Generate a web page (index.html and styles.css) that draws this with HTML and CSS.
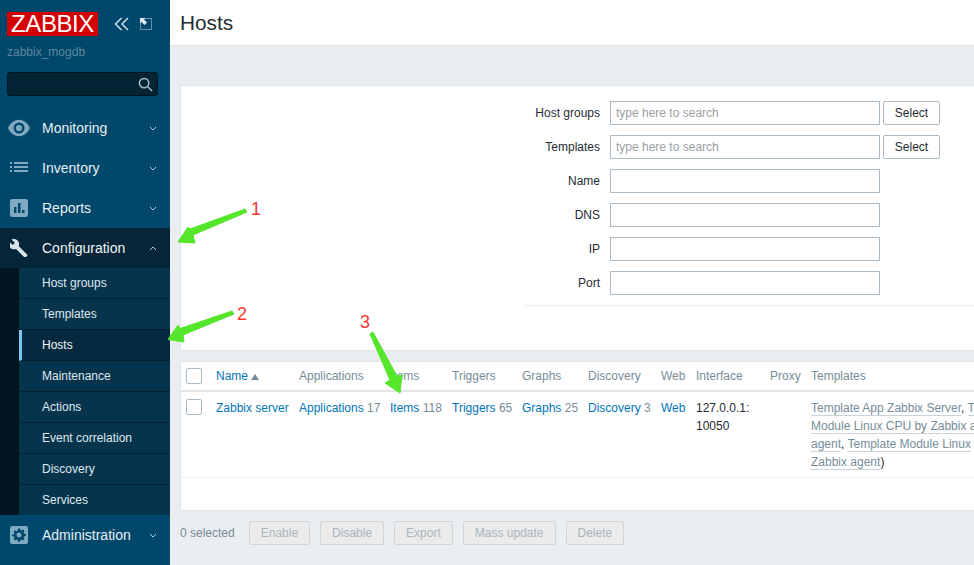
FILE: index.html
```html
<!DOCTYPE html>
<html lang="en">
<head>
<meta charset="utf-8">
<title>Hosts</title>
<link rel="stylesheet" href="styles.css">
</head>
<body>
<div class="app">
  <aside class="sidebar">
    <div class="brand">
      <div class="logo">ZABBIX</div>
      <svg class="collapse" viewBox="0 0 16 14"><path d="M7.500 1 1.500 7l6 6M14 1 8 7l6 6"/></svg>
      <svg class="kiosk" viewBox="0 0 12 12"><rect x=".5" y=".5" width="11" height="11" class="dots"/><path class="fill" d="M0 0h5.500L4 1.500l3 3-2.500 2.500-3-3L0 5.500z"/></svg>
    </div>
    <div class="server">zabbix_mogdb</div>
    <div class="search">
      <svg viewBox="0 0 16 16"><circle cx="6.500" cy="6.500" r="5"/><path d="m10.500 10.500 4.500 4.500"/></svg>
    </div>
    <nav class="menu">
      <div class="item">
        <svg class="ico eye" viewBox="0 0 20 20"><path class="fill" fill-rule="evenodd" d="M10 2.500C5.500 2.500 1.800 6 0 10c1.800 4 5.500 7.500 10 7.500s8.200-3.500 10-7.500c-1.800-4-5.500-7.500-10-7.500zm0 2.500a5 5 0 1 1 0 10 5 5 0 0 1 0-10zm0 2.200a2.800 2.800 0 1 0 0 5.600 2.800 2.800 0 0 0 0-5.600z"/></svg>
        <span>Monitoring</span><svg class="chev" viewBox="0 0 8 5"><path d="m1 1 3 3 3-3"/></svg>
      </div>
      <div class="item">
        <svg class="ico" viewBox="0 0 18 18"><path class="fill" d="M0 3h2v2H0zM4 3h14v2H4zM0 7h2v2H0zM4 7h14v2H4zM0 11h2v2H0zM4 11h14v2H4z"/></svg>
        <span>Inventory</span><svg class="chev" viewBox="0 0 8 5"><path d="m1 1 3 3 3-3"/></svg>
      </div>
      <div class="item">
        <svg class="ico" viewBox="0 0 18 18"><path class="fill" fill-rule="evenodd" d="M2 0h14a2 2 0 0 1 2 2v14a2 2 0 0 1-2 2H2a2 2 0 0 1-2-2V2a2 2 0 0 1 2-2zm2 8v6h2.500V8zm4-4v10h2.500V4zm4 7v3h2.500v-3z"/></svg>
        <span>Reports</span><svg class="chev" viewBox="0 0 8 5"><path d="m1 1 3 3 3-3"/></svg>
      </div>
      <div class="item open">
        <svg class="ico wrench" viewBox="0 0 20 20"><path d="M19 17.200 9.800 8c.8-2.200.3-4.700-1.400-6.400C6.500-.2 3.800-.5 1.700.5l3.700 3.700-2.500 2.500L-.9 3.100C-1.900 5.200-1.500 7.900.3 9.700c1.700 1.700 4.200 2.200 6.400 1.400l9.200 9.200c.5.500 1.200.500 1.600 0l1.500-1.500c.500-.6.500-1.200 0-1.600z"/></svg>
        <span>Configuration</span><svg class="chev" viewBox="0 0 8 5"><path d="m1 4 3-3 3 3"/></svg>
      </div>
      <ul class="submenu">
        <li>Host groups</li>
        <li>Templates</li>
        <li class="current">Hosts</li>
        <li>Maintenance</li>
        <li>Actions</li>
        <li>Event correlation</li>
        <li>Discovery</li>
        <li>Services</li>
      </ul>
      <div class="item">
        <svg class="ico" viewBox="0 0 18 18"><path class="fill" fill-rule="evenodd" d="M2 0h14a2 2 0 0 1 2 2v14a2 2 0 0 1-2 2H2a2 2 0 0 1-2-2V2a2 2 0 0 1 2-2zm6 3-.4 1.800-1.200.5-1.500-1-1.400 1.400 1 1.500-.5 1.200L2.200 8v2l1.800.4.5 1.200-1 1.500 1.400 1.400 1.500-1 1.200.5L8 15.800h2l.4-1.800 1.200-.5 1.500 1 1.400-1.400-1-1.500.5-1.200 1.800-.4V8l-1.800-.4-.5-1.200 1-1.500-1.400-1.400-1.500 1-1.200-.5L10 2.400H8zm1 3.500a2.500 2.500 0 1 1 0 5 2.500 2.500 0 0 1 0-5z"/></svg>
        <span>Administration</span><svg class="chev" viewBox="0 0 8 5"><path d="m1 1 3 3 3-3"/></svg>
      </div>
    </nav>
  </aside>
  <main class="main">
    <header class="page-head"><h1>Hosts</h1></header>
    <section class="filter">
      <div class="fields">
        <div class="row"><label>Host groups</label><input class="field" placeholder="type here to search"><button class="select">Select</button></div>
        <div class="row"><label>Templates</label><input class="field" placeholder="type here to search"><button class="select">Select</button></div>
        <div class="row"><label>Name</label><input class="field"></div>
        <div class="row"><label>DNS</label><input class="field"></div>
        <div class="row"><label>IP</label><input class="field"></div>
        <div class="row"><label>Port</label><input class="field"></div>
      </div>
    </section>
    <section class="list">
      <table>
        <colgroup>
          <col class="c-check"><col class="c-name"><col class="c-apps"><col class="c-items"><col class="c-trig"><col class="c-graph"><col class="c-disc"><col class="c-web"><col class="c-if"><col class="c-proxy"><col class="c-tpl">
        </colgroup>
        <thead>
          <tr>
            <th><span class="box"></span></th>
            <th><a>Name</a><i class="sort"></i></th>
            <th>Applications</th><th>Items</th><th>Triggers</th><th>Graphs</th><th>Discovery</th><th>Web</th><th>Interface</th><th>Proxy</th><th>Templates</th>
          </tr>
        </thead>
        <tbody>
          <tr>
            <td><span class="box"></span></td>
            <td><a>Zabbix server</a></td>
            <td><a>Applications</a> <em>17</em></td>
            <td><a>Items</a> <em>118</em></td>
            <td><a>Triggers</a> <em>65</em></td>
            <td><a>Graphs</a> <em>25</em></td>
            <td><a>Discovery</a> <em>3</em></td>
            <td><a>Web</a></td>
            <td class="iface">127.0.0.1:<br>10050</td>
            <td></td>
            <td class="tpl"><div class="tpl-clip"><u>Template App Zabbix Server</u>, <u>T</u><br><u>Module Linux CPU by Zabbix a</u><br><u>agent</u>, <u>Template Module Linux</u><br><u>Zabbix agent</u>)</div></td>
          </tr>
        </tbody>
      </table>
    </section>
    <footer class="actions">
      <span class="count">0 selected</span>
      <button class="act">Enable</button><button class="act">Disable</button><button class="act">Export</button><button class="act">Mass update</button><button class="act">Delete</button>
    </footer>
  </main>
  <svg class="arrows" viewBox="0 0 974 565">
    <path d="M245 209 247 212 193 235 195 243 178 242 188 227 190 229z"/>
    <path d="M232 311 234 314 183 335 184 342 168 339.500 178 325 180 328.500z"/>
    <path d="M370 334 373 332 397 376 402 375 400 393 385 383 390 380z"/>
  </svg>
  <span class="mark m1">1</span>
  <span class="mark m2">2</span>
  <span class="mark m3">3</span>
</div>
</body>
</html>
```
FILE: styles.css
```css
* { box-sizing: border-box; }
html, body { margin: 0; height: 100%; overflow: hidden; }
body { font: 12px/14px "Liberation Sans", Arial, sans-serif; color: #1f2c33; background: #ebeef0; }
.app { position: relative; display: flex; width: 974px; height: 565px; overflow: hidden; }

.sidebar { flex: 0 0 170px; background: #00476c; display: flex; flex-direction: column; }
.brand { display: flex; align-items: center; padding: 12px 0 0 7px; height: 36px; }
.logo { width: 91px; height: 24px; background: #d40000; color: #fff; font-size: 24px; line-height: 24px; text-align: center; letter-spacing: -.4px; }
.collapse { width: 16px; height: 14px; margin-left: 16px; fill: none; stroke: #cfdde6; stroke-width: 1.500; }
.kiosk { width: 12px; height: 12px; margin-left: 10px; }
.kiosk .dots { fill: none; stroke: #cfdde6; stroke-dasharray: 1 1; }
.kiosk .fill { fill: #dfe8ee; }
.server { color: #5e879f; padding: 9px 0 0 7px; height: 36px; }
.search { width: 151px; height: 24px; margin: 0 0 0 7px; background: #042334; border: 1px solid #021622; border-radius: 3px; display: flex; align-items: center; justify-content: flex-end; padding-right: 4px; }
.search svg { width: 15px; height: 15px; fill: none; stroke: #a2bdcc; stroke-width: 1.600; }
.menu { margin-top: 12px; display: flex; flex-direction: column; }
.item { height: 40px; display: flex; align-items: center; padding-left: 10px; color: #e8eff3; font-size: 14px; }
.item span { margin-left: 14px; flex: 1; }
.ico { width: 18px; height: 18px; flex: none; }
.ico .fill { fill: #80aac2; }
.eye { width: 22px; height: 22px; margin: 0 -2px; }
.wrench { fill: #d8e3ea; }
.chev { width: 8px; height: 5px; margin-right: 13px; fill: none; stroke: #b4c9d6; stroke-width: 1; }
.open { background: #052638; color: #f1f5f7; }
.submenu { list-style: none; margin: 0; padding: 0 0 0 19px; background: #021520; }
.submenu li { height: 31px; padding: 8px 0 0 23px; background: #07344d; border-bottom: 1px solid #03202f; color: #dfe8ee; }
.submenu li:last-child { border-bottom: 0; height: 30px; }
.submenu li.current { background: #052a3f; border-left: 3px solid #7cc5f2; padding-left: 20px; color: #f1f5f7; }

.main { flex: 1; min-width: 0; display: flex; flex-direction: column; }
.page-head { height: 46px; background: #fff; border-bottom: 1px solid #dfe4e7; padding-left: 10px; }
.page-head h1 { margin: 0; font-size: 20.800px; font-weight: 400; line-height: 46px; color: #1f2c33; }

.filter { margin: 39px 0 0 10px; height: 266px; background: #fff; border: 1px solid #dfe4e7; border-right: 0; }
.fields { margin: 15px 0 0 344px; height: 205px; border-bottom: 1px solid #ebeef0; }
.row { display: flex; align-items: center; height: 24px; margin-bottom: 10px; }
.row label { width: 75px; margin-right: 10px; text-align: right; }
.field { width: 270px; height: 24px; border: 1px solid #a9bac4; background: #fff; padding: 0 5px; font: inherit; outline: 0; }
.field::placeholder { color: #9aa0a4; }
.select { width: 57px; height: 24px; margin-left: 3px; padding: 0; background: #fff; border: 1px solid #a9bac4; border-radius: 2px; font: inherit; color: #1f2c33; }

.list { margin: 10px 0 0 10px; height: 150px; background: #fff; border: 1px solid #dfe4e7; border-right: 0; overflow: hidden; }
table { border-collapse: separate; border-spacing: 0; table-layout: fixed; width: 794px; }
th { font-weight: 400; color: #768d99; text-align: left; height: 30px; padding: 0; border-bottom: 2px solid #dfe4e7; white-space: nowrap; }
td { vertical-align: top; padding: 7px 0 0; height: 86px; border-bottom: 1px solid #ebeef0; white-space: nowrap; line-height: 18px; }
a { color: #0275b8; }
em { font-style: normal; color: #768d99; }
.box { display: block; width: 16px; height: 16px; margin-left: 5px; border: 1px solid #a9bac4; border-radius: 2px; background: #fff; }
th .box { margin-top: -1px; }
.sort { display: inline-block; margin-left: 3px; border: 4.500px solid transparent; border-top: 0; border-bottom: 6px solid #768d99; }
.c-check { width: 35px; }
.c-name { width: 83px; }
.c-apps { width: 91px; }
.c-items { width: 62px; }
.c-trig { width: 70px; }
.c-graph { width: 66px; }
.c-disc { width: 73px; }
.c-web { width: 35px; }
.c-if { width: 74px; }
.c-proxy { width: 41px; }
.c-tpl { width: 164px; }
.iface { color: #1f2c33; }
.tpl { color: #1f2c33; }
.tpl-clip { overflow: hidden; }
u { color: #768d99; text-decoration: none; border-bottom: 1px solid #c9d3d9; }

.actions { display: flex; align-items: center; padding: 10px 0 0 10px; color: #768d99; }
.count { margin-right: 14px; }
.act { height: 24px; padding: 0 11px; margin-right: 10px; background: #ebebeb; border: 1px solid #cfd6da; border-radius: 2px; color: #a9b6bd; font: inherit; }

.arrows { position: absolute; left: 0; top: 0; width: 974px; height: 565px; fill: #55e62c; stroke: #55e62c; stroke-width: 1; stroke-linejoin: round; pointer-events: none; }
.mark { position: absolute; font-size: 18px; line-height: 20px; color: #f23a2f; }
.m1 { left: 251px; top: 199px; }
.m2 { left: 237px; top: 304px; }
.m3 { left: 360px; top: 312px; }
```
